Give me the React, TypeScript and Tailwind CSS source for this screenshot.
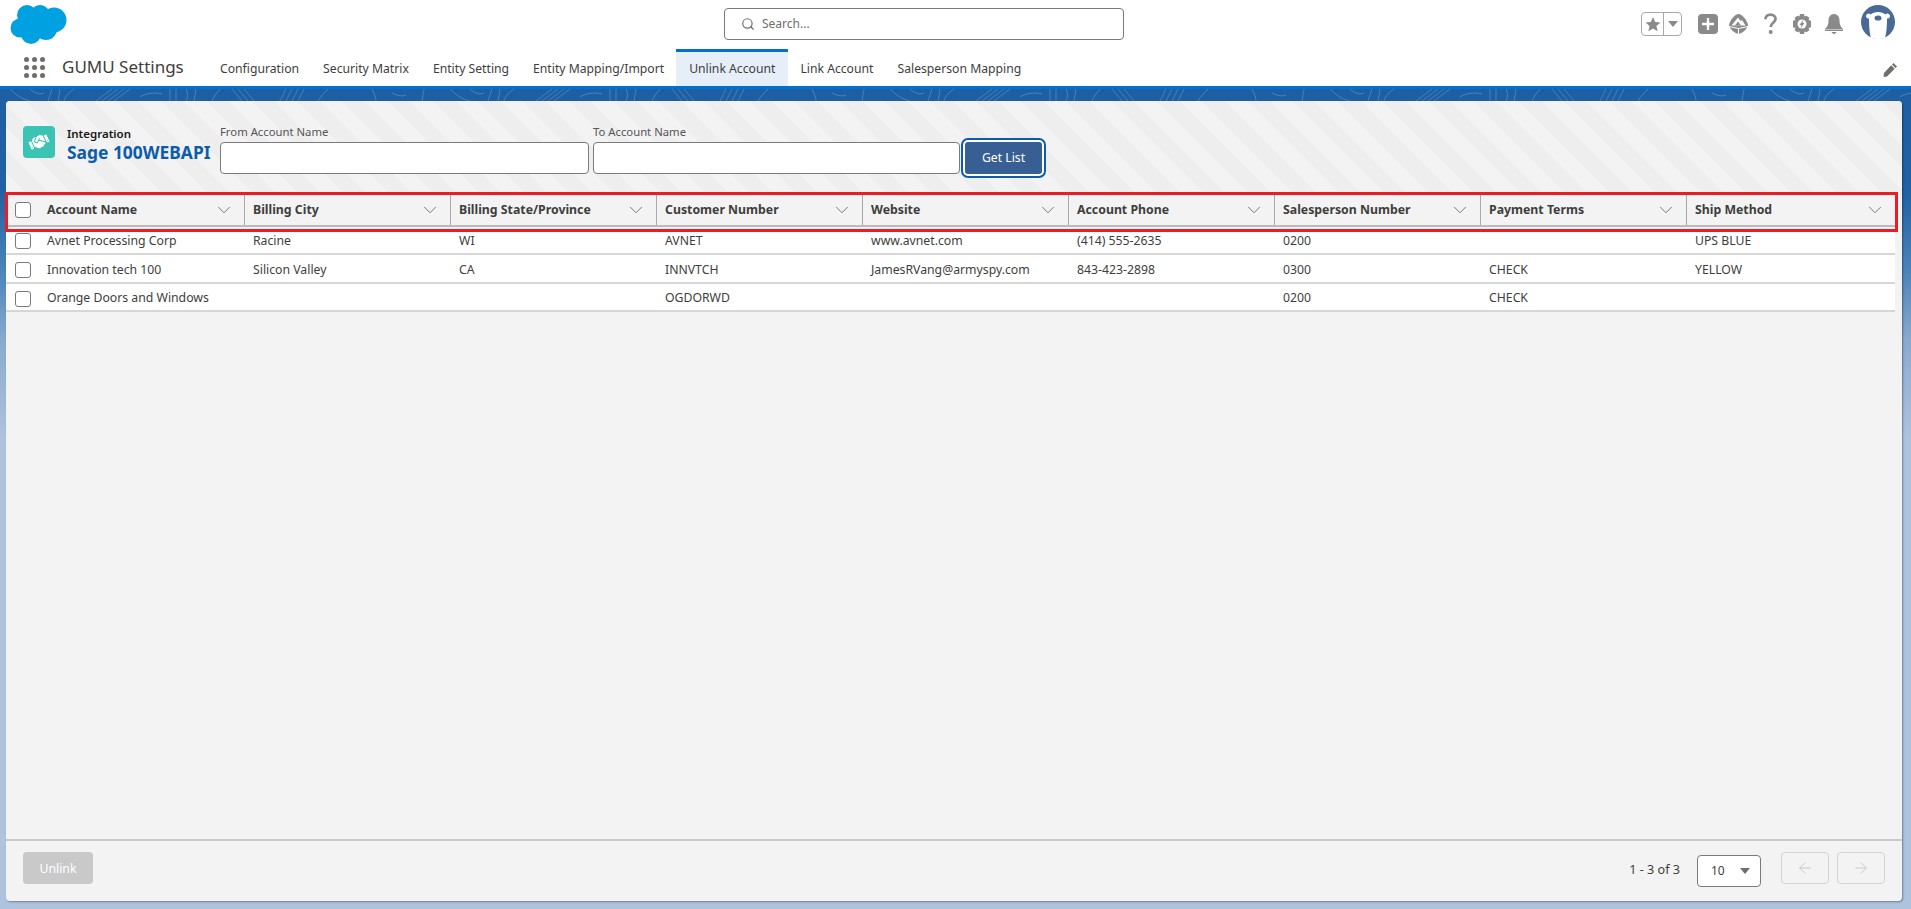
import { ArrowLeft, ArrowRight, ChevronDown, Search } from "lucide-react";
import { FaHandshake } from "react-icons/fa";

const tabs = [
  "Configuration",
  "Security Matrix",
  "Entity Setting",
  "Entity Mapping/Import",
  "Unlink Account",
  "Link Account",
  "Salesperson Mapping",
];

const columns = [
  "Account Name",
  "Billing City",
  "Billing State/Province",
  "Customer Number",
  "Website",
  "Account Phone",
  "Salesperson Number",
  "Payment Terms",
  "Ship Method",
];

const rows = [
  { height: "h-[26px]", cells: ["Avnet Processing Corp", "Racine", "WI", "AVNET", "www.avnet.com", "(414) 555-2635", "0200", "", "UPS BLUE"] },
  { height: "h-[29px] pt-[3px]", cells: ["Innovation tech 100", "Silicon Valley", "CA", "INNVTCH", "JamesRVang@armyspy.com", "843-423-2898", "0300", "CHECK", "YELLOW"] },
  { height: "h-[28px] pt-[3px]", cells: ["Orange Doors and Windows", "", "", "OGDORWD", "", "", "0200", "CHECK", ""] },
];

function Cloud() {
  return (
    <svg width="57" height="40" viewBox="0 0 57 40" fill="#00a1e0">
      <circle cx="17" cy="11" r="10" />
      <circle cx="30" cy="11" r="10" />
      <circle cx="44" cy="16" r="12.5" />
      <circle cx="10" cy="24" r="9.5" />
      <circle cx="21" cy="30" r="10" />
      <circle cx="36" cy="25" r="11" />
      <circle cx="25" cy="20" r="9" />
    </svg>
  );
}

function Waffle() {
  return (
    <div className="grid w-[21px] grid-cols-3 gap-[3px]">
      {Array.from({ length: 9 }).map((_, i) => (
        <span key={i} className="h-[5px] w-[5px] rounded-full bg-[#706e6b]" />
      ))}
    </div>
  );
}

function HeaderIcons() {
  return (
    <div className="mr-[16px] mt-[5px] flex items-start">
      {/* favourites */}
      <div className="mt-[7px] flex h-[24px] w-[41px] rounded-[4px] border border-[#a9a9a9]">
        <div className="flex w-[22px] items-center justify-center border-r border-[#a9a9a9]">
          <svg width="16" height="16" viewBox="0 0 24 24" fill="#8a8a8a">
            <path d="M12 1.5l3.2 7.4 8 .7-6.1 5.3 1.9 7.9L12 18.6l-7 4.2 1.9-7.9L.8 9.6l8-.7z" />
          </svg>
        </div>
        <div className="flex flex-1 items-center justify-center">
          <svg width="10" height="6" viewBox="0 0 10 6" fill="#8a8a8a">
            <path d="M0 0h10L5 6z" />
          </svg>
        </div>
      </div>
      {/* new */}
      <div className="ml-[16px] mt-[9px] flex h-[20px] w-[20px] items-center justify-center rounded-[4px] bg-[#8a8a8a]">
        <svg width="14" height="14" viewBox="0 0 14 14" stroke="#fff" strokeWidth="2.4">
          <path d="M7 1v12M1 7h12" />
        </svg>
      </div>
      {/* trailhead */}
      <svg className="ml-[11px] mt-[9px]" width="19" height="20" viewBox="0 0 19 20">
        <path d="M9.5 0C13 0 18 6 19 11c-1 4-5 8-9.5 9C5 19 1 15 0 11 1 6 6 0 9.5 0z" fill="#8a8a8a" />
        <path d="M2.500 11.500L9 3.500l2.500 3.500 1.500-1 3.500 5.500z" fill="#fff" />
        <path d="M6 11.500l3-4 3 4z" fill="#8a8a8a" />
        <path d="M0 12.500l9.500 2 9.500-2M9.500 14.500V20" fill="none" stroke="#fff" strokeWidth="1" />
      </svg>
      {/* help */}
      <svg className="ml-[16px] mt-[8px]" width="13" height="22" viewBox="0 0 13 22" fill="none">
        <path d="M1.5 6.2C1.5 3.4 3.6 1.6 6.5 1.6s5 1.8 5 4.4c0 3.8-4.8 3.8-4.8 8" stroke="#8a8a8a" strokeWidth="2.8" />
        <circle cx="6.7" cy="19" r="2" fill="#8a8a8a" />
      </svg>
      {/* setup */}
      <svg className="ml-[16px] mt-[9px]" width="18" height="20" viewBox="0 0 18 20">
        <path d="M7 0h4l.6 2.6 2-.9L16.500 4l-1 2 2.500.8v6.400l-2.500.8 1 2-2.900 2.300-2-.9L11 20H7l-.6-2.600-2 .9L1.500 16l1-2L0 13.200V6.800L2.500 6l-1-2 2.900-2.300 2 .9z" fill="#8a8a8a" />
        <circle cx="9" cy="10" r="4.500" fill="#fff" />
        <path d="M10.500 5.500L6.500 11h2l-1 3.500 4-5.500h-2z" fill="#8a8a8a" />
      </svg>
      {/* bell */}
      <svg className="ml-[14px] mt-[9px]" width="18" height="20" viewBox="0 0 18 20" fill="#8a8a8a">
        <path d="M9 0c3.600 0 5.500 3 5.500 6.500 0 4 1 6 3.500 8.500H0c2.500-2.500 3.500-4.500 3.500-8.500C3.500 3 5.400 0 9 0z" />
        <path d="M0 15.500h18V17H0zM6.500 18h5c-.5 1.300-1.400 2-2.500 2s-2-.7-2.500-2z" />
      </svg>
      {/* avatar */}
      <svg className="ml-[18px]" width="34" height="34" viewBox="0 0 34 34">
        <circle cx="17" cy="17" r="17" fill="#4a6a96" />
        <path d="M5 11a2.500 2.500 0 0 1 4.500-1.500C11.500 8 14 7 17 7s5.500 1 7.500 2.500A2.500 2.500 0 0 1 29 11a2.500 2.500 0 0 1-3 2.400C26 20 25.500 28 24 33c-4 1.300-10 1.300-14 0-1.500-5-2-13-2-19.600A2.500 2.500 0 0 1 5 11z" fill="#fff" />
        <ellipse cx="17" cy="13" rx="3.500" ry="2.600" fill="#4a6a96" />
      </svg>
    </div>
  );
}

// faint contour lines on the dark blue band behind the panel
function BandPattern() {
  const strokes = [
    "M10 0c6 6 12 10 20 12", "M30 0c4 4 10 6 14 4", "M52 0l-4 12", "M60 0l-2 12", "M74 0c-6 4-9 8-10 12",
    "M112 0L96 12", "M118 0L102 12", "M124 0L108 12", "M130 0L114 12", "M140 8c6-4 14-5 22-3",
    "M170 0v12", "M176 0v12", "M186 0c2 4 2 8 0 12", "M196 0l-2 12", "M212 12c2-4 4-8 8-12",
    "M232 0l10 12", "M238 0l10 12", "M244 0l10 12", "M286 0l-6 12", "M292 0l-6 12", "M298 0l-6 12", "M304 0l-6 12",
    "M318 12c2-4 6-8 10-12", "M372 0c2 4 4 8 4 12", "M392 4c4 2 10 4 14 2", "M424 0l-2 12",
  ];
  return (
    <svg className="block h-[12px] w-full" viewBox="0 0 1911 12" preserveAspectRatio="none" fill="none" stroke="#ffffff" strokeOpacity="0.2">
      {[0, 440, 880, 1320, 1760].map((x) => (
        <g key={x} transform={`translate(${x} 0)`}>
          {strokes.map((d) => (
            <path key={d} d={d} />
          ))}
        </g>
      ))}
    </svg>
  );
}

function Checkbox() {
  return <span className="block h-[16px] w-[16px] rounded-[3px] border border-[#7a7a7a] bg-white" />;
}

export default function App() {
  return (
    <div className="flex h-[909px] flex-col overflow-hidden bg-[linear-gradient(180deg,#ffffff_0,#ffffff_89px,#1e5fa3_89px,#1f61a4_190px,#4a83ba_270px,#8aa9cf_340px,#aec3de_440px,#aec3de_100%)] font-['Noto_Sans',sans-serif] text-[#3e3e3c]">
      <header className="h-[86px] bg-white">
        <div className="flex h-[47px] items-start">
          <div className="ml-[10px] mt-[4px]">
            <Cloud />
          </div>
          <div className="ml-[657px] mt-[8px] flex h-[32px] w-[400px] items-center rounded-[4px] border border-[#7a7a7a] pl-[16px]">
            <Search size={14} strokeWidth={2} className="text-[#706e6b]" />
            <span className="ml-[7px] text-[12px] text-[#706e6b]">Search...</span>
          </div>
          <div className="ml-auto">
            <HeaderIcons />
          </div>
        </div>
        <nav className="flex h-[39px] items-end">
          <div className="mb-[8px] ml-[24px]">
            <Waffle />
          </div>
          <div className="mb-[7px] ml-[17px] w-[146px] text-[17px] leading-[24px]">GUMU Settings</div>
          {tabs.map((tab) => (
            <div
              key={tab}
              className={
                tab === "Unlink Account"
                  ? "flex h-[37px] items-center border-t-[3px] border-[#0070d2] bg-[#e6eef8] px-[13px] text-[12.2px]"
                  : "flex h-[37px] items-center border-t-[3px] border-transparent px-[12px] text-[12.2px]"
              }
            >
              {tab}
            </div>
          ))}
          <svg className="mb-[9px] ml-auto mr-[14px]" width="14" height="14" viewBox="0 0 14 14" fill="#706e6b">
            <path d="M10.500 0L14 3.500l-1.500 1.500L9 1.500zM8.200 2.300l3.500 3.500L4 13.500.5 14l.5-4z" />
          </svg>
        </nav>
      </header>
      <div className="h-[3px] shrink-0 bg-[#0070d2]" />
      <BandPattern />

      <main className="ml-[6px] mr-[9px] flex h-[800px] flex-col rounded-[4px] bg-[#f3f3f3] shadow-[1px_1px_2px_rgba(0,0,0,0.35)]">
        {/* filter bar */}
        <section className="flex h-[94px] shrink-0 items-start rounded-t-[4px] bg-[repeating-linear-gradient(45deg,#f3f3f3_0,#f3f3f3_16px,#eeeeee_16px,#eeeeee_32px)] pl-[17px]">
          <div className="mt-[25px] flex w-[197px]">
            <div className="flex h-[32px] w-[32px] items-center justify-center rounded-[4px] bg-[#3bc4b4]">
              <FaHandshake size={20} className="-rotate-[25deg] text-white" />
            </div>
            <div className="ml-[12px]">
              <div className="text-[11.5px] font-semibold leading-[15px] text-[#181818]">Integration</div>
              <div className="text-[17.4px] font-bold leading-[22px] text-[#0b5cab]">Sage 100WEBAPI</div>
            </div>
          </div>
          <div className="mt-[23px] w-[369px]">
            <label className="block h-[18px] text-[11.3px] leading-[16px] text-[#555]">From Account Name</label>
            <div className="h-[32px] rounded-[4px] border border-[#7a7a7a] bg-white" />
          </div>
          <div className="ml-[4px] mt-[23px] w-[367px]">
            <label className="block h-[18px] text-[11.3px] leading-[16px] text-[#555]">To Account Name</label>
            <div className="h-[32px] rounded-[4px] border border-[#7a7a7a] bg-white" />
          </div>
          <button className="ml-[5px] mt-[41px] h-[32px] w-[77px] rounded-[3px] bg-[#375f94] text-[12.2px] text-white shadow-[0_0_0_2px_#fff,0_0_0_4px_#0b5cab]">
            Get List
          </button>
        </section>

        {/* table */}
        <div className="mr-[7px]">
          <div className="relative z-10 ml-[2px] flex h-[34px] outline-[3px] outline-[#ed1c24]">
            <div className="flex h-[32px] w-[31px] shrink-0 items-center border-b-2 border-[#bbbbbb] pl-[7px]">
              <Checkbox />
            </div>
            <div className="grid h-[32px] flex-1 grid-cols-[repeat(8,206px)_1fr] border-b-2 border-[#bbbbbb]">
              {columns.map((col) => (
                <div key={col} className="flex items-center border-r border-[#a9a9a9] pl-[8px] pr-[9px] last:border-r-0">
                  <span className="flex-1 text-[12.3px] font-bold text-[#3e3e3c]">{col}</span>
                  <ChevronDown size={22} strokeWidth={1} className="text-[#706e6b]" />
                </div>
              ))}
            </div>
          </div>
          {rows.map((row) => (
            <div key={row.cells[0]} className={`flex items-center border-b-2 border-[#d6d6d6] bg-white ${row.height}`}>
              <div className="w-[33px] shrink-0 pl-[9px]">
                <Checkbox />
              </div>
              <div className="grid flex-1 grid-cols-[repeat(8,206px)_1fr]">
                {row.cells.map((cell, i) => (
                  <div key={i} className="truncate pl-[8px] text-[12.25px] text-[#3e3e3c]">
                    {cell}
                  </div>
                ))}
              </div>
            </div>
          ))}
        </div>

        {/* footer */}
        <footer className="mt-auto flex h-[62px] shrink-0 items-start border-t-2 border-[#c9c9c9] px-[17px]">
          <button className="mt-[11px] h-[32px] w-[70px] rounded-[4px] bg-[#c9c9c9] pt-[2px] text-[12.3px] text-white">Unlink</button>
          <span className="ml-auto mt-[21px] text-[12.6px] leading-[16px] text-[#3e3e3c]">1 - 3 of 3</span>
          <div className="ml-[17px] mt-[14px] flex h-[32px] w-[64px] items-center justify-between rounded-[4px] border border-[#7a7a7a] bg-white pl-[13px] pr-[10px] text-[12px]">
            10
            <svg width="10" height="6" viewBox="0 0 10 6" fill="#706e6b">
              <path d="M0 0h10L5 6z" />
            </svg>
          </div>
          <button className="ml-[20px] mt-[11px] flex h-[32px] w-[48px] items-center justify-center rounded-[4px] border border-[#d4d4d4]">
            <ArrowLeft size={18} strokeWidth={1.3} className="text-[#c9c9c9]" />
          </button>
          <button className="ml-[8px] mt-[11px] flex h-[32px] w-[48px] items-center justify-center rounded-[4px] border border-[#d4d4d4]">
            <ArrowRight size={18} strokeWidth={1.3} className="text-[#c9c9c9]" />
          </button>
        </footer>
      </main>
    </div>
  );
}
